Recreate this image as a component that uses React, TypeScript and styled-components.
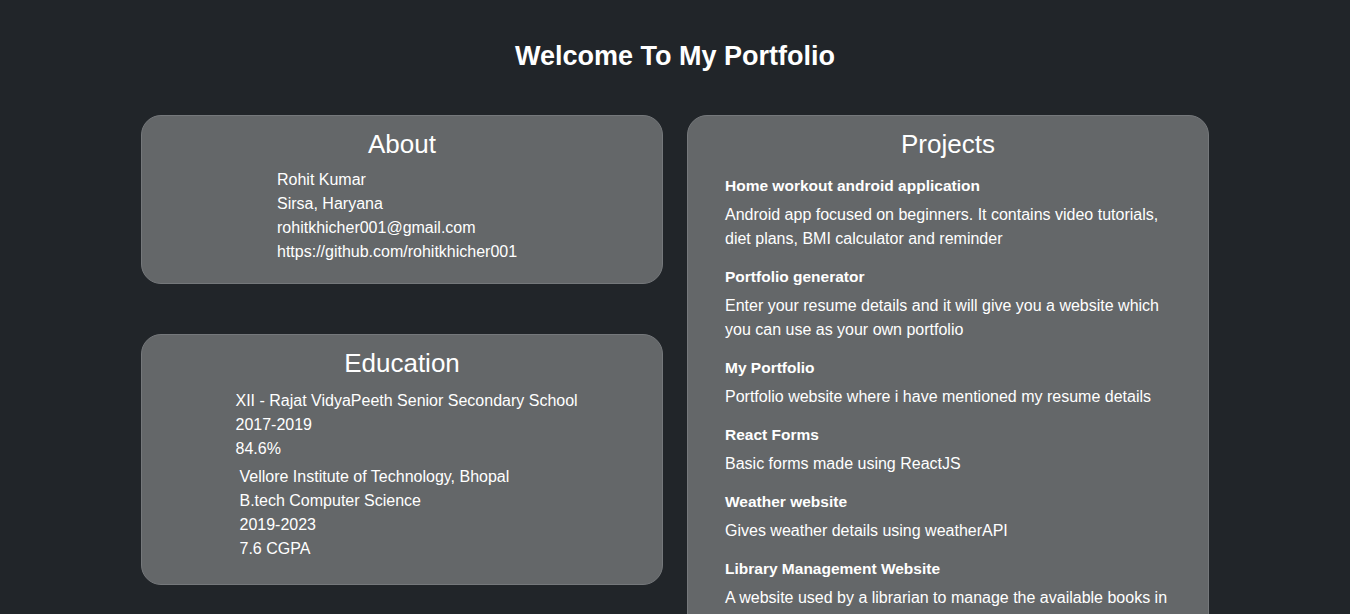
import styled, { createGlobalStyle } from "styled-components";

const GlobalStyle = createGlobalStyle`
  body {
    margin: 0;
    background: #212529;
    color: #ffffff;
    font-family: "Liberation Sans", Arial, sans-serif;
  }
`;

const Page = styled.div`
  padding: 40px 0 40px;
  min-height: 100vh;
  box-sizing: border-box;
`;

const Title = styled.h2`
  margin: 0 0 43px;
  text-align: center;
  font-size: 27px;
  line-height: 32px;
  font-weight: 700;
`;

const Grid = styled.div`
  width: 1068px;
  margin: 0 auto;
  display: grid;
  grid-template-columns: 522px 522px;
  column-gap: 24px;
  align-items: start;
`;

const Column = styled.div`
  display: flex;
  flex-direction: column;
  gap: 50px;
`;

const Card = styled.section<{ $padX?: number; $padBottom?: number }>`
  background: #646769;
  border: 1px solid #75787b;
  border-radius: 20px;
  padding: 13px ${(p) => p.$padX ?? 20}px ${(p) => p.$padBottom ?? 19}px;
`;

const CardTitle = styled.h3<{ $gap?: number }>`
  margin: 0 0 ${(p) => p.$gap ?? 8}px;
  text-align: center;
  font-size: 26px;
  line-height: 31px;
  font-weight: 400;
`;

const Centered = styled.div`
  display: flex;
  justify-content: center;
`;

const Stack = styled.div<{ $width: number }>`
  width: ${(p) => p.$width}px;
  display: flex;
  flex-direction: column;
  white-space: nowrap;
`;

const Block = styled.div<{ $indent?: number; $gap?: number }>`
  padding-left: ${(p) => p.$indent ?? 0}px;
  margin-bottom: ${(p) => p.$gap ?? 0}px;
  font-size: 16px;
  line-height: 24px;
`;

const Line = styled.div``;

const ProjectList = styled.div`
  padding-top: 7px;
`;

const Project = styled.div`
  margin-bottom: 15px;
`;

const ProjectName = styled.div`
  font-size: 15.5px;
  line-height: 22px;
  font-weight: 700;
  margin-bottom: 6px;
`;

const ProjectDesc = styled.div`
  font-size: 16px;
  line-height: 24px;
`;

const projects = [
  {
    name: "Home workout android application",
    desc: "Android app focused on beginners. It contains video tutorials, diet plans, BMI calculator and reminder",
  },
  {
    name: "Portfolio generator",
    desc: "Enter your resume details and it will give you a website which you can use as your own portfolio",
  },
  {
    name: "My Portfolio",
    desc: "Portfolio website where i have mentioned my resume details",
  },
  { name: "React Forms", desc: "Basic forms made using ReactJS" },
  { name: "Weather website", desc: "Gives weather details using weatherAPI" },
  {
    name: "Library Management Website",
    desc: "A website used by a librarian to manage the available books in the library and keep track of issued books",
  },
];

export default function App() {
  return (
    <>
      <GlobalStyle />
      <Page>
        <Title>Welcome To My Portfolio</Title>
        <Grid>
          <Column>
            <Card>
              <CardTitle $gap={8}>About</CardTitle>
              <Centered>
                <Stack $width={250}>
                  <Block>
                    <Line>Rohit Kumar</Line>
                    <Line>Sirsa, Haryana</Line>
                    <Line>rohitkhicher001@gmail.com</Line>
                    <Line>https://github.com/rohitkhicher001</Line>
                  </Block>
                </Stack>
              </Centered>
            </Card>
            <Card>
              <CardTitle $gap={10}>Education</CardTitle>
              <Centered>
                <Stack $width={333}>
                  <Block $gap={4}>
                    <Line>XII - Rajat VidyaPeeth Senior Secondary School</Line>
                    <Line>2017-2019</Line>
                    <Line>84.6%</Line>
                  </Block>
                  <Block $indent={4} $gap={4}>
                    <Line>Vellore Institute of Technology, Bhopal</Line>
                    <Line>B.tech Computer Science</Line>
                    <Line>2019-2023</Line>
                    <Line>7.6 CGPA</Line>
                  </Block>
                </Stack>
              </Centered>
            </Card>
          </Column>
          <Card $padX={37}>
            <CardTitle>Projects</CardTitle>
            <ProjectList>
              {projects.map((p) => (
                <Project key={p.name}>
                  <ProjectName>{p.name}</ProjectName>
                  <ProjectDesc>{p.desc}</ProjectDesc>
                </Project>
              ))}
            </ProjectList>
          </Card>
        </Grid>
      </Page>
    </>
  );
}
